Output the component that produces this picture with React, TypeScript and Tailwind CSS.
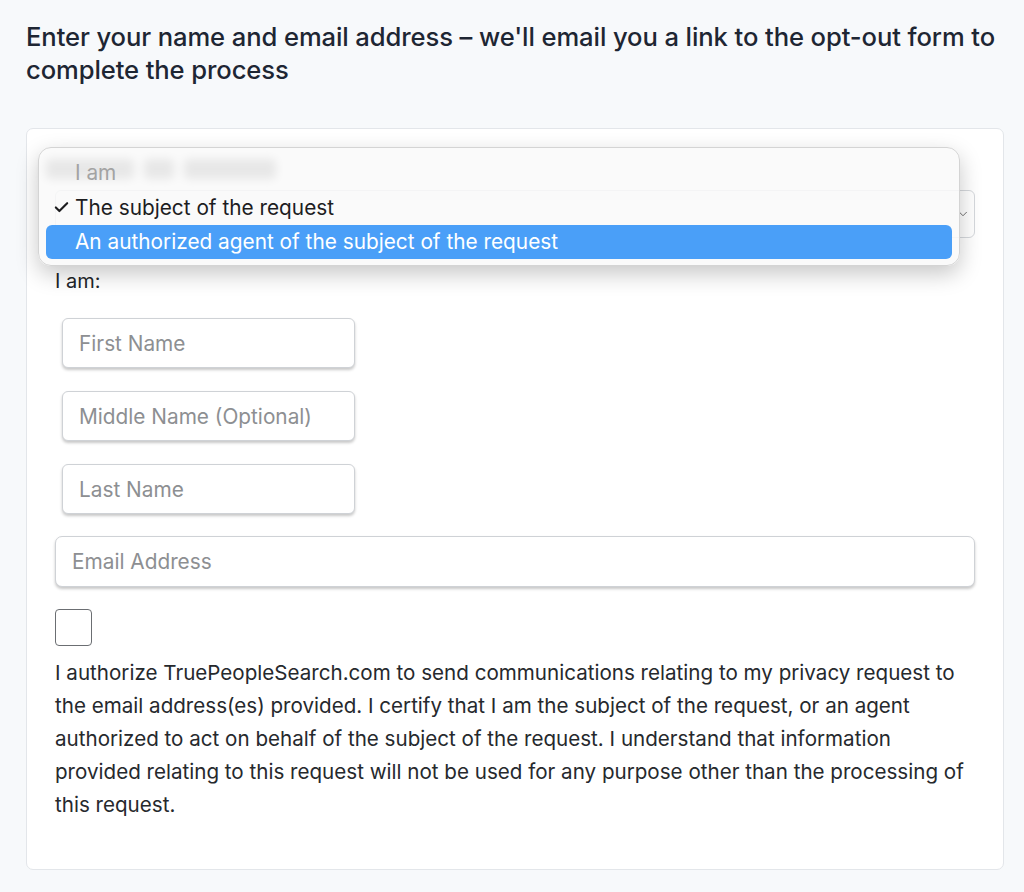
import { Check, ChevronDown } from "lucide-react";

const font = { fontFamily: "Inter, 'Liberation Sans', sans-serif" };

function NameInput({ placeholder }: { placeholder: string }) {
  return (
    <input
      type="text"
      placeholder={placeholder}
      className="ml-[7px] h-[50px] w-[293px] rounded-[6px] border border-[#cfd2d6] bg-white px-[16px] text-[20.8px] text-[#333] shadow-[0_2px_3px_rgba(0,0,0,0.22)] outline-none placeholder:text-[#8d8f92]"
    />
  );
}

export default function App() {
  return (
    <main
      className="min-h-[892px] bg-[#f7f9fb] px-[26px] pt-[20px] text-[#212529]"
      style={font}
    >
      <h1 className="text-[25.6px] font-medium leading-[33px] tracking-[-0.1px] text-[#1e2633]">
        Enter your name and email address – we'll email you a link to the
        opt-out form to complete the process
      </h1>

      <section className="relative mt-[42px] w-[978px] rounded-[7px] border border-[#e3e6ea] bg-white px-[28px] pt-[27px] pb-[48px]">
        {/* redacted label under the open menu */}
        <div className="-ml-[9px] flex h-[26px] items-center gap-[10px] blur-[5px]">
          <div className="h-[20px] w-[88px] rounded-[4px] bg-[#8a8a8a]" />
          <div className="h-[20px] w-[30px] rounded-[4px] bg-[#8a8a8a]" />
          <div className="h-[20px] w-[92px] rounded-[4px] bg-[#8a8a8a]" />
        </div>
        <div className="mt-[8px] flex h-[48px] items-center justify-end rounded-[6px] border border-[#d6d9dd] bg-white pr-[4px]">
          <ChevronDown className="h-[14px] w-[14px] text-[#666]" strokeWidth={1.6} />
        </div>

        <p className="mt-[29px] text-[20px] leading-[28px]">I am:</p>

        <div className="mt-[23px] flex flex-col gap-[23px]">
          <NameInput placeholder="First Name" />
          <NameInput placeholder="Middle Name (Optional)" />
          <NameInput placeholder="Last Name" />
        </div>

        <input
          type="email"
          placeholder="Email Address"
          className="mt-[22px] h-[51px] w-full rounded-[7px] border border-[#cfd2d6] bg-white px-[16px] text-[20.8px] shadow-[0_2px_3px_rgba(0,0,0,0.22)] outline-none placeholder:text-[#8d8f92]"
        />

        <div className="mt-[22px] h-[37px] w-[37px] rounded-[4px] border border-[#6b6e72] bg-white" />

        <p className="mt-[10px] text-[20.6px] leading-[33px] text-[#26292d]">
          I authorize TruePeopleSearch.com to send communications relating to my
          privacy request to the email address(es) provided. I certify that I am
          the subject of the request, or an agent authorized to act on behalf of
          the subject of the request. I understand that information provided
          relating to this request will not be used for any purpose other than
          the processing of this request.
        </p>

        {/* open native select menu */}
        <div className="absolute left-[11px] top-[18px] w-[922px] rounded-[13px] border border-[#d4d4d4] bg-[rgba(249,249,249,0.84)] px-[7px] pt-[7px] pb-[6px] text-[20.8px] leading-[35px] shadow-[0_8px_22px_rgba(0,0,0,0.22)]">
          <div className="pl-[29px] text-[#a3a3a3]">I am</div>
          <div className="flex items-center text-[#1d1d1f]">
            <span className="flex w-[29px] justify-center pl-[1px]">
              <Check className="h-[17px] w-[17px]" strokeWidth={3} />
            </span>
            The subject of the request
          </div>
          <div className="h-[34px] rounded-[6px] bg-[#4a9ff8] pl-[29px] leading-[34px] text-white">
            An authorized agent of the subject of the request
          </div>
        </div>
      </section>
    </main>
  );
}
